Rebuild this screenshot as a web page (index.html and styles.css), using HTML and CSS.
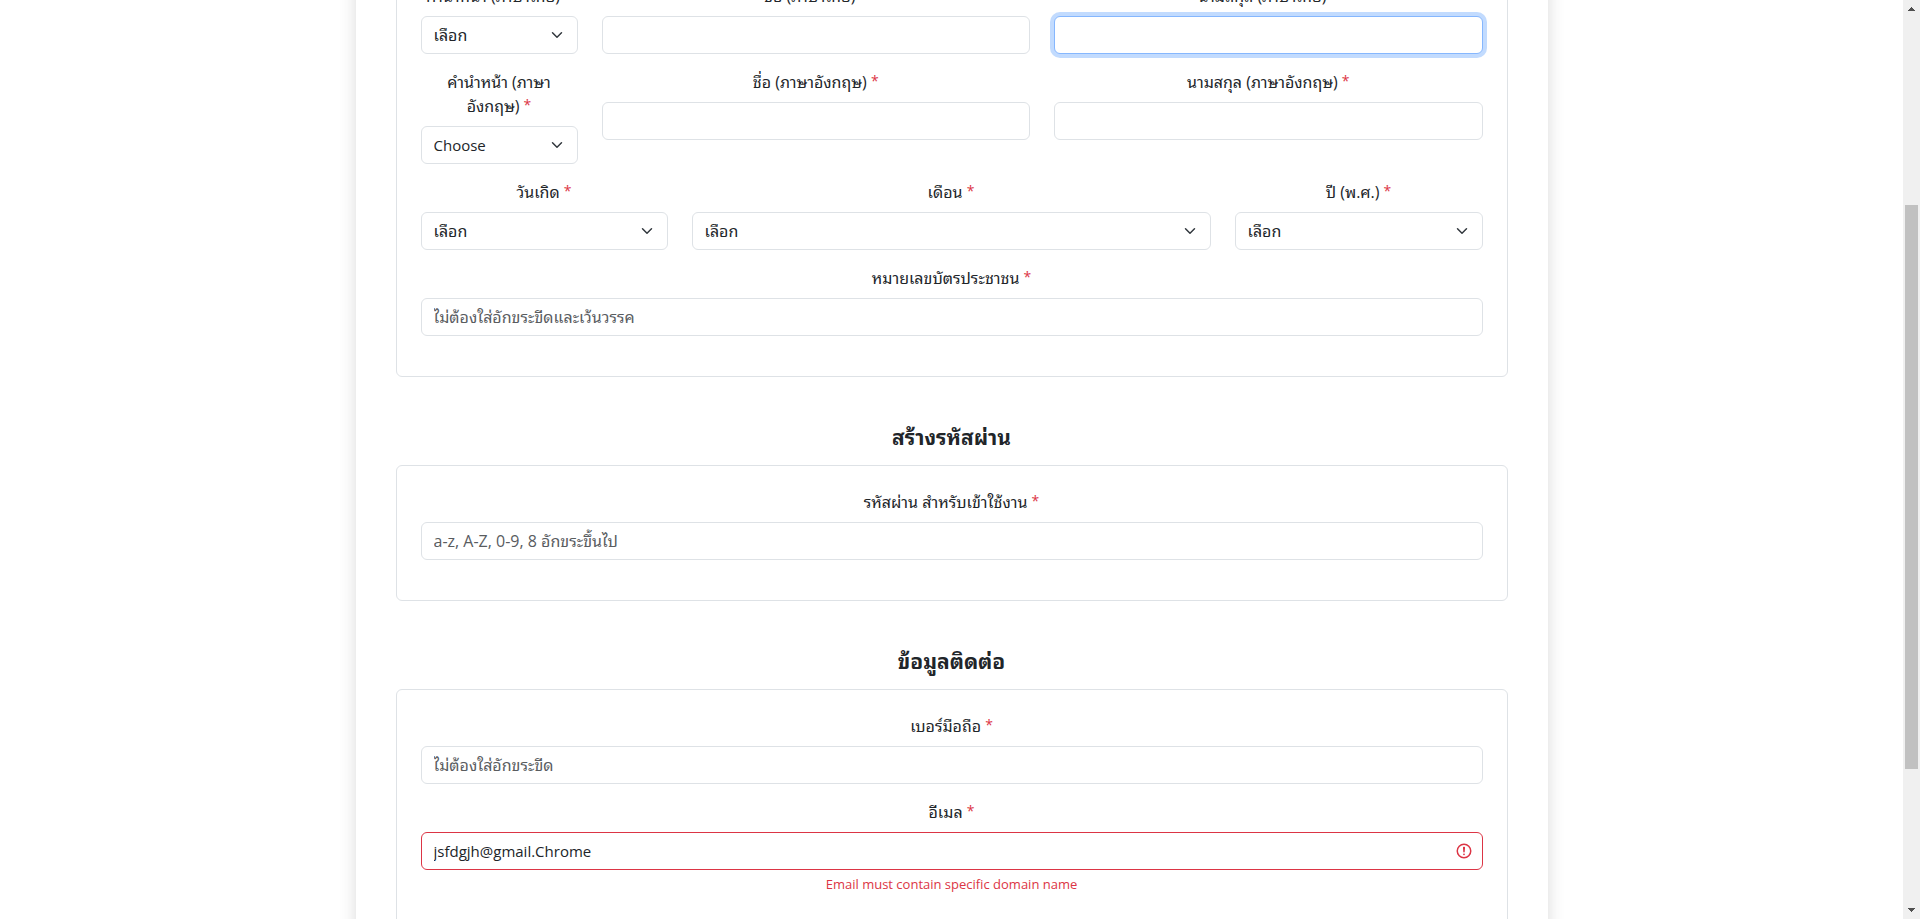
FILE: index.html
```html
<!DOCTYPE html>
<html lang="th">
<head>
<meta charset="utf-8">
<title>สมัครสมาชิก</title>
<link rel="stylesheet" href="styles.css">
</head>
<body>
<div class="page">
  <main class="viewport">
    <form class="card" novalidate>
      <section class="panel">
        <div class="row row-name">
          <div class="field">
            <label for="prefix-th">คำนำหน้า (ภาษาไทย) <span class="required">*</span></label>
            <select class="select" id="prefix-th"><option>เลือก</option></select>
          </div>
          <div class="field">
            <label for="first-th">ชื่อ (ภาษาไทย) <span class="required">*</span></label>
            <input class="control" id="first-th" type="text">
          </div>
          <div class="field">
            <label for="last-th">นามสกุล (ภาษาไทย) <span class="required">*</span></label>
            <input class="control is-focused" id="last-th" type="text">
          </div>
        </div>
        <div class="row row-name">
          <div class="field">
            <label for="prefix-en">คำนำหน้า (ภาษา<wbr><span class="keep">อังกฤษ) <span class="required">*</span></span></label>
            <select class="select latin" id="prefix-en"><option>Choose</option></select>
          </div>
          <div class="field">
            <label for="first-en">ชื่อ (ภาษาอังกฤษ) <span class="required">*</span></label>
            <input class="control" id="first-en" type="text">
          </div>
          <div class="field">
            <label for="last-en">นามสกุล (ภาษาอังกฤษ) <span class="required">*</span></label>
            <input class="control" id="last-en" type="text">
          </div>
        </div>
        <div class="row row-birth">
          <div class="field">
            <label for="day">วันเกิด <span class="required">*</span></label>
            <select class="select" id="day"><option>เลือก</option></select>
          </div>
          <div class="field">
            <label for="month">เดือน <span class="required">*</span></label>
            <select class="select" id="month"><option>เลือก</option></select>
          </div>
          <div class="field">
            <label for="year">ปี (พ.ศ.) <span class="required">*</span></label>
            <select class="select" id="year"><option>เลือก</option></select>
          </div>
        </div>
        <div class="row">
          <div class="field">
            <label for="citizen">หมายเลขบัตรประชาชน <span class="required">*</span></label>
            <input class="control" id="citizen" type="text" placeholder="ไม่ต้องใส่อักขระขีดและเว้นวรรค">
          </div>
        </div>
      </section>

      <h2 class="heading">สร้างรหัสผ่าน</h2>
      <section class="panel">
        <div class="row">
          <div class="field">
            <label for="password">รหัสผ่าน สำหรับเข้าใช้งาน <span class="required">*</span></label>
            <input class="control" id="password" type="password" placeholder="a-z, A-Z, 0-9, 8 อักขระขึ้นไป">
          </div>
        </div>
      </section>

      <h2 class="heading">ข้อมูลติดต่อ</h2>
      <section class="panel">
        <div class="row">
          <div class="field">
            <label for="mobile">เบอร์มือถือ <span class="required">*</span></label>
            <input class="control" id="mobile" type="tel" placeholder="ไม่ต้องใส่อักขระขีด">
          </div>
        </div>
        <div class="row">
          <div class="field">
            <label for="email">อีเมล <span class="required">*</span></label>
            <input class="control latin is-invalid" id="email" type="email" value="jsfdgjh@gmail.Chrome" spellcheck="false" aria-describedby="email-error">
            <p class="error" id="email-error">Email must contain specific domain name</p>
          </div>
        </div>
      </section>
    </form>
  </main>
  <div class="scrollbar" aria-hidden="true">
    <svg class="arrow" viewBox="0 0 17 17" shape-rendering="crispEdges"><path fill="#505050" d="M8 7h1v1h1v1h1v1h1v1H5v-1h1V9h1V8h1z"/></svg>
    <div class="track"><div class="thumb"></div></div>
    <svg class="arrow" viewBox="0 0 17 17" shape-rendering="crispEdges"><path fill="#505050" d="M5 6h7v1h-1v1h-1v1H9v1H8V9H7V8H6V7H5z"/></svg>
  </div>
</div>
</body>
</html>
```
FILE: styles.css
```css
*,
*::before,
*::after {
  box-sizing: border-box;
}

body {
  margin: 0;
  font-family: "Segoe UI", "Open Sans", "Noto Sans Thai Looped", "Loma", "Noto Sans Thai", sans-serif;
  font-size: 16px;
  line-height: 24px;
  color: #212529;
  background: #fff;
}

.page {
  display: flex;
  height: 100vh;
  overflow: hidden;
}

.viewport {
  flex: 1;
  min-width: 0;
  overflow: hidden;
}

.card {
  width: 100%;
  max-width: 1192px;
  /* scrolled position of the form */
  margin: -81px auto 0;
  padding: 40px;
  background: #fff;
  box-shadow: 0 8px 16px rgba(0, 0, 0, 0.15);
}

.panel {
  padding: 24px 24px 40px;
  border: 1px solid #dee2e6;
  border-radius: 6px;
  display: grid;
  gap: 16px;
}

.row {
  display: grid;
  column-gap: 24px;
}

.row-name {
  grid-template-columns: 157px 1fr 1fr;
}

.row-birth {
  grid-template-columns: 247px 1fr 248px;
}

.field {
  min-width: 0;
}

.field label {
  display: block;
  margin-bottom: 8px;
  text-align: center;
}

.keep {
  white-space: nowrap;
}

.required {
  font-size: 14px;
  line-height: 1;
  vertical-align: 2px;
  color: #dc3545;
}

.control,
.select {
  display: block;
  width: 100%;
  height: 38px;
  margin: 0;
  padding: 6px 12px;
  font: inherit;
  color: inherit;
  background-color: #fff;
  border: 1px solid #dee2e6;
  border-radius: 6px;
  outline: 0;
  appearance: none;
}

.latin {
  font-size: 15px;
}

.control::placeholder {
  color: #595c5f;
  opacity: 1;
}

.select {
  padding-right: 36px;
  background-image: url("data:image/svg+xml,%3csvg xmlns='http://www.w3.org/2000/svg' viewBox='0 0 16 16'%3e%3cpath fill='none' stroke='%23343a40' stroke-linecap='round' stroke-linejoin='round' stroke-width='2' d='m2 5 6 6 6-6'/%3e%3c/svg%3e");
  background-repeat: no-repeat;
  background-position: right 12px center;
  background-size: 16px 12px;
}

.is-focused {
  border-color: #86b7fe;
  box-shadow: 0 0 0 4px rgba(13, 110, 253, 0.25);
}

.is-invalid {
  padding-right: 36px;
  border-color: #dc3545;
  background-image: url("data:image/svg+xml,%3csvg xmlns='http://www.w3.org/2000/svg' viewBox='0 0 12 12' width='12' height='12' fill='none' stroke='%23dc3545'%3e%3ccircle cx='6' cy='6' r='4.5'/%3e%3cpath stroke-linejoin='round' d='M5.8 3.6h.4L6 6.5z'/%3e%3ccircle cx='6' cy='8.2' r='.6' fill='%23dc3545' stroke='none'/%3e%3c/svg%3e");
  background-repeat: no-repeat;
  background-position: right 9px center;
  background-size: 18px 18px;
}

.error {
  margin: 4px 0 0;
  font-size: 13px;
  line-height: 21px;
  text-align: center;
  color: #dc3545;
}

.heading {
  margin: 48px 0 16px;
  font-size: 21px;
  line-height: 24px;
  font-weight: 700;
  text-align: center;
}

.scrollbar {
  display: flex;
  flex-direction: column;
  width: 17px;
  background: #f0f0f0;
}

.arrow {
  display: block;
  width: 17px;
  height: 17px;
}

.track {
  flex: 1;
  padding: 188px 2px 0;
}

.thumb {
  height: 564px;
  background: #c1c1c1;
}
```
